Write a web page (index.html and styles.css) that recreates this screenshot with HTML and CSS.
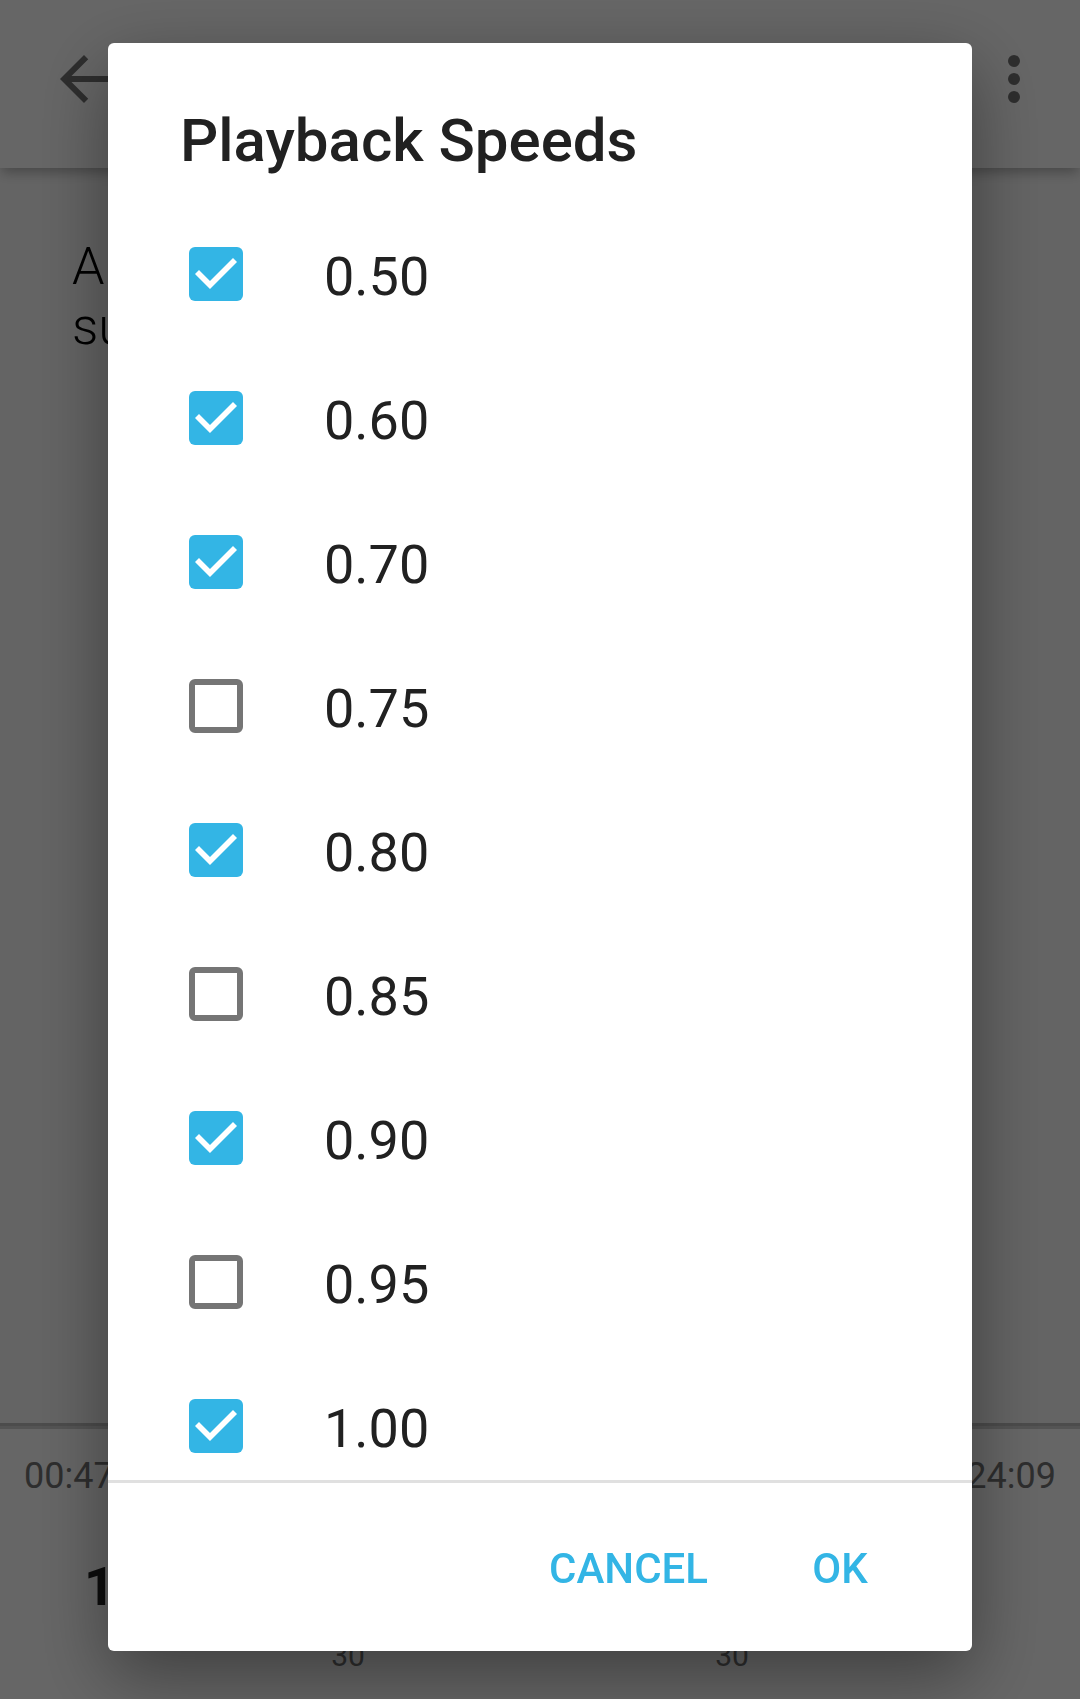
FILE: index.html
```html
<!DOCTYPE html>
<html lang="en">
<head>
<meta charset="utf-8">
<meta name="viewport" content="width=device-width, initial-scale=1">
<title>Playback Speeds</title>
<link rel="stylesheet" href="styles.css">
</head>
<body>
<div class="app">
  <header class="toolbar">
    <button class="icon-button" type="button" aria-label="Back">
      <svg class="icon" viewBox="0 0 24 24"><path d="M20 11H7.83l5.59-5.59L12 4l-8 8 8 8 1.41-1.41L7.83 13H20v-2z"/></svg>
    </button>
    <button class="icon-button" type="button" aria-label="More options">
      <svg class="icon" viewBox="0 0 24 24"><circle cx="12" cy="6" r="2"/><circle cx="12" cy="12" r="2"/><circle cx="12" cy="18" r="2"/></svg>
    </button>
  </header>
  <main class="description">A<br>su</main>
  <footer class="player">
    <div class="progress"></div>
    <div class="times"><span>00:47</span><span>24:09</span></div>
    <div class="controls">
      <span class="speed">1</span>
      <span class="skip skip-back">30</span>
      <span class="skip skip-forward">30</span>
    </div>
  </footer>
</div>

<div class="scrim">
  <form class="dialog" role="dialog" aria-labelledby="dialog-title">
    <h1 class="dialog-title" id="dialog-title">Playback Speeds</h1>
    <div class="options">
      <label class="option"><input class="checkbox" type="checkbox" checked><span class="option-text">0.50</span></label>
      <label class="option"><input class="checkbox" type="checkbox" checked><span class="option-text">0.60</span></label>
      <label class="option"><input class="checkbox" type="checkbox" checked><span class="option-text">0.70</span></label>
      <label class="option"><input class="checkbox" type="checkbox"><span class="option-text">0.75</span></label>
      <label class="option"><input class="checkbox" type="checkbox" checked><span class="option-text">0.80</span></label>
      <label class="option"><input class="checkbox" type="checkbox"><span class="option-text">0.85</span></label>
      <label class="option"><input class="checkbox" type="checkbox" checked><span class="option-text">0.90</span></label>
      <label class="option"><input class="checkbox" type="checkbox"><span class="option-text">0.95</span></label>
      <label class="option"><input class="checkbox" type="checkbox" checked><span class="option-text">1.00</span></label>
    </div>
    <div class="actions">
      <button class="action" type="button">CANCEL</button>
      <button class="action" type="button">OK</button>
    </div>
  </form>
</div>
</body>
</html>
```

FILE: styles.css
```css
* {
  box-sizing: border-box;
}

body {
  margin: 0;
  font-family: Roboto, sans-serif;
  color: #212121;
}

button {
  border: 0;
  background: none;
  font-family: inherit;
  cursor: pointer;
}

/* Player screen behind the dialog */
.app {
  display: flex;
  flex-direction: column;
  height: 100vh;
  overflow: hidden;
  background: #fafafa;
}

.toolbar {
  display: flex;
  justify-content: space-between;
  align-items: flex-start;
  height: 168px;
  padding: 43px 30px 0 48px;
  background: #fff;
  box-shadow: 0 6px 12px -2px rgba(0, 0, 0, 0.3);
}

.icon-button {
  padding: 0;
  width: 72px;
  height: 72px;
}

.icon {
  display: block;
  width: 72px;
  height: 72px;
  fill: #737373;
}

.description {
  flex: 1;
  padding: 69px 72px 0;
  font-size: 52px;
  font-weight: 300;
  line-height: 60px;
  color: #000;
}

.player {
  height: 276px;
  background: #fff;
}

.progress {
  height: 6px;
  border-top: 3px solid #bdbdbd;
  background: #d2d2d2;
}

.times {
  display: flex;
  justify-content: space-between;
  padding: 26px 24px 0;
  font-size: 36px;
  line-height: 42px;
  color: #737373;
}

.controls {
  display: grid;
  grid-template-columns: repeat(5, 1fr);
  padding: 58px 60px 0;
}

.speed {
  padding-left: 24px;
  font-size: 54px;
  font-weight: 700;
  line-height: 64px;
}

.skip {
  padding-top: 83px;
  font-size: 30px;
  line-height: 36px;
  text-align: center;
  color: #737373;
}

.skip-forward {
  grid-column: 4;
}

/* Dialog */
.scrim {
  position: fixed;
  inset: 0;
  display: flex;
  padding: 43px 10% 48px;
  background: rgba(0, 0, 0, 0.6);
}

.dialog {
  display: flex;
  flex: 1;
  flex-direction: column;
  min-height: 0;
  border-radius: 6px;
  background: #fff;
  box-shadow: 0 24px 72px rgba(0, 0, 0, 0.4);
}

.dialog-title {
  margin: 0;
  padding: 62px 72px 25px;
  font-size: 60px;
  font-weight: 500;
  line-height: 72px;
}

.options {
  flex: 1;
  min-height: 0;
  overflow-y: auto;
  scrollbar-width: none;
}

.option {
  display: flex;
  align-items: center;
  gap: 81px;
  height: 144px;
  padding: 0 81px;
  font-size: 54px;
  line-height: 64px;
}

.option-text {
  padding-top: 6px;
}

.checkbox {
  flex: none;
  appearance: none;
  width: 54px;
  height: 54px;
  margin: 0;
  border: 6px solid #757575;
  border-radius: 6px;
}

.checkbox:checked {
  border: 0;
  background: #33b5e5;
}

.checkbox:checked::before {
  content: "";
  display: block;
  width: 54px;
  height: 54px;
  background: #fff;
  clip-path: polygon(21px 42px, 6px 27px, 10px 23px, 21px 34px, 44px 11px, 48px 15px);
}

.actions {
  display: flex;
  justify-content: flex-end;
  align-items: center;
  gap: 12px;
  height: 171px;
  padding: 0 36px;
  border-top: 3px solid #e0e0e0;
}

.action {
  min-width: 192px;
  height: 108px;
  padding: 2px 24px 0;
  font-size: 42px;
  font-weight: 500;
  color: #33b5e5;
}
```
